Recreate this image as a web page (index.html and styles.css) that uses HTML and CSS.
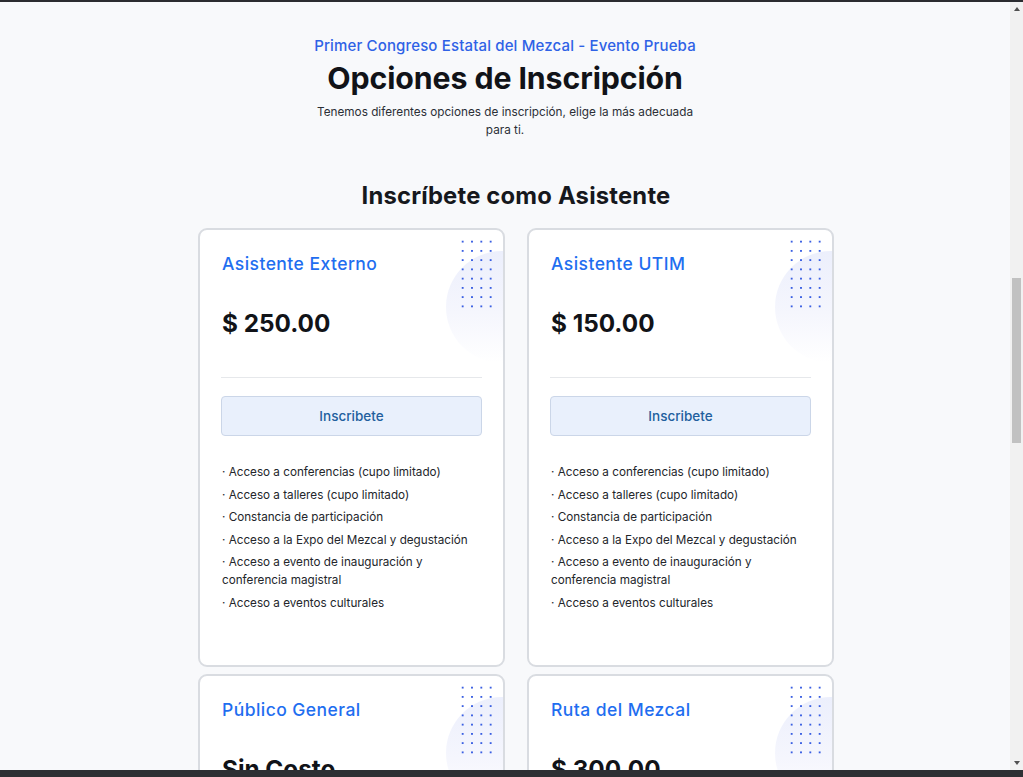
FILE: index.html
```html
<!DOCTYPE html>
<html lang="es">
<head>
<meta charset="utf-8">
<title>Opciones de Inscripción</title>
<link rel="stylesheet" href="styles.css">
</head>
<body>
<div class="topstrip"></div>
<div class="viewport">
  <main class="page">
    <header class="intro">
      <p class="eyebrow">Primer Congreso Estatal del Mezcal - Evento Prueba</p>
      <h1 class="title">Opciones de Inscripción</h1>
      <p class="lead">Tenemos diferentes opciones de inscripción, elige la más adecuada para ti.</p>
    </header>
    <section class="plans">
      <h2 class="plans-title">Inscríbete como Asistente</h2>
      <div class="grid">
        <article class="card">
          <div class="deco"><div class="circle"></div><div class="dots"></div></div>
          <h3 class="card-title">Asistente Externo</h3>
          <p class="price">$ 250.00</p>
          <hr class="divider">
          <button class="btn">Inscribete</button>
          <ul class="features">
            <li>· Acceso a conferencias (cupo limitado)</li>
            <li>· Acceso a talleres (cupo limitado)</li>
            <li>· Constancia de participación</li>
            <li>· Acceso a la Expo del Mezcal y degustación</li>
            <li>· Acceso a evento de inauguración y conferencia magistral</li>
            <li>· Acceso a eventos culturales</li>
          </ul>
        </article>
        <article class="card">
          <div class="deco"><div class="circle"></div><div class="dots"></div></div>
          <h3 class="card-title">Asistente UTIM</h3>
          <p class="price">$ 150.00</p>
          <hr class="divider">
          <button class="btn">Inscribete</button>
          <ul class="features">
            <li>· Acceso a conferencias (cupo limitado)</li>
            <li>· Acceso a talleres (cupo limitado)</li>
            <li>· Constancia de participación</li>
            <li>· Acceso a la Expo del Mezcal y degustación</li>
            <li>· Acceso a evento de inauguración y conferencia magistral</li>
            <li>· Acceso a eventos culturales</li>
          </ul>
        </article>
        <article class="card">
          <div class="deco"><div class="circle"></div><div class="dots"></div></div>
          <h3 class="card-title">Público General</h3>
          <p class="price">Sin Costo</p>
          <hr class="divider">
          <button class="btn">Inscribete</button>
          <ul class="features">
            <li>· Acceso a la Expo del Mezcal y degustación</li>
            <li>· Acceso a eventos culturales</li>
          </ul>
        </article>
        <article class="card">
          <div class="deco"><div class="circle"></div><div class="dots"></div></div>
          <h3 class="card-title">Ruta del Mezcal</h3>
          <p class="price">$ 300.00</p>
          <hr class="divider">
          <button class="btn">Inscribete</button>
          <ul class="features">
            <li>· Recorrido por la Ruta del Mezcal</li>
            <li>· Transporte incluido</li>
          </ul>
        </article>
      </div>
    </section>
  </main>
  <div class="scrollbar" aria-hidden="true">
    <div class="sb-arrow sb-up"></div>
    <div class="sb-track"><div class="sb-thumb"></div></div>
    <div class="sb-arrow sb-down"></div>
  </div>
</div>
<div class="bottombar"></div>
</body>
</html>
```

FILE: styles.css
```css
* { box-sizing: border-box; }
html, body { margin: 0; padding: 0; }
body {
  width: 1023px;
  height: 777px;
  overflow: hidden;
  background: #2b2c30;
  font-family: Inter, "Noto Sans", "DejaVu Sans", sans-serif;
  color: #111827;
}
.topstrip { height: 2px; background: #2b2c30; }
.bottombar { height: 7px; background: #2e3034; }
.viewport {
  display: flex;
  height: 768px;
  background: #f8f9fb;
}
.page {
  flex: 1;
  overflow: hidden;
  padding-top: 34px;
}
.intro { text-align: center; }
.eyebrow {
  margin: 0;
  font-size: 15px;
  line-height: 20px;
  font-weight: 500;
  letter-spacing: 0.15px;
  color: #2f62e6;
}
.title {
  margin: 4px 0 0;
  font-size: 30.3px;
  line-height: 36px;
  font-weight: 700;
  color: #111318;
  letter-spacing: -0.1px;
}
.lead {
  margin: 7px auto 0;
  width: 380px;
  font-size: 11.75px;
  line-height: 18px;
  color: #2b2f36;
}
.plans {
  width: 658px;
  margin: 43px auto 0;
  padding-left: 22px;
}
.plans-title {
  margin: 0 0 18px;
  text-align: center;
  font-size: 23.8px;
  line-height: 28px;
  font-weight: 700;
  letter-spacing: 0.2px;
  color: #16181d;
}
.grid {
  display: grid;
  grid-template-columns: 307px 307px;
  column-gap: 22px;
  row-gap: 7px;
}
.card {
  position: relative;
  overflow: hidden;
  background: #ffffff;
  border: 2px solid #d9dce1;
  border-radius: 9px;
  padding: 22px 22px 53px;
}
.deco {
  position: absolute;
  top: 0;
  right: 0;
  width: 70px;
  height: 140px;
  pointer-events: none;
}
.circle {
  position: absolute;
  left: 13px;
  top: 21px;
  width: 112px;
  height: 112px;
  border-radius: 50%;
  background: linear-gradient(180deg, #eceffc 0%, #f5f6fd 55%, #ffffff 100%);
}
.dots {
  position: absolute;
  left: 24.6px;
  top: 7.4px;
  width: 38px;
  height: 75px;
  background-image: radial-gradient(circle, #3a5fe2 1px, transparent 1.4px);
  background-size: 9.33px 9.25px;
  background-position: 0 0;
}
.card-title {
  position: relative;
  margin: 0;
  font-size: 17.5px;
  line-height: 24px;
  font-weight: 500;
  letter-spacing: 0.45px;
  color: #1f6ef0;
}
.price {
  position: relative;
  margin: 32px 0 0;
  font-size: 24.3px;
  line-height: 30px;
  font-weight: 700;
  color: #111318;
}
.divider {
  margin: 39px -1px 0;
  border: 0;
  border-top: 1px solid #e6e8eb;
  height: 0;
}
.btn {
  display: block;
  width: calc(100% + 2px);
  margin: 18px -1px 0;
  height: 40px;
  background: #e9f0fc;
  border: 1px solid #cbd6e8;
  border-radius: 4px;
  font-family: inherit;
  font-size: 13.5px;
  font-weight: 500;
  color: #225f9e;
  cursor: pointer;
}
.features {
  list-style: none;
  margin: 27px 0 0;
  padding: 0;
}
.features li {
  font-size: 11.7px;
  line-height: 18px;
  color: #23262b;
  margin-bottom: 4.6px;
}
.features li:last-child { margin-bottom: 0; }
.scrollbar {
  width: 13px;
  flex: none;
  display: flex;
  flex-direction: column;
  background: #f1f1f1;
}
.sb-arrow {
  height: 14px;
  display: flex;
  align-items: center;
  justify-content: center;
}
.sb-up::before, .sb-down::before {
  content: "";
  width: 0;
  height: 0;
  border-left: 3.5px solid transparent;
  border-right: 3.5px solid transparent;
}
.sb-up::before { border-bottom: 4px solid #505050; }
.sb-down::before { border-top: 4px solid #505050; }
.sb-track {
  flex: 1;
  padding: 262px 2px 0;
}
.sb-thumb {
  height: 165px;
  background: #c1c1c1;
}
```
